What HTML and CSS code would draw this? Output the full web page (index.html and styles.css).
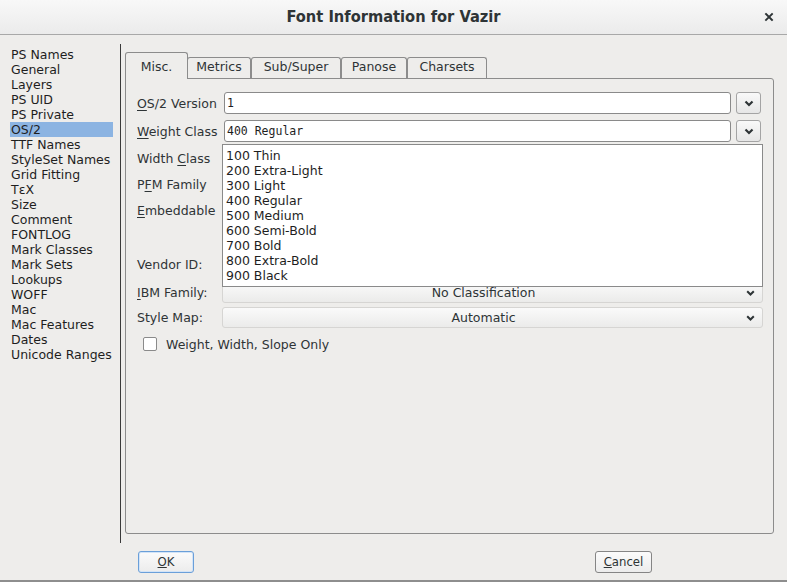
FILE: index.html
```html
<!DOCTYPE html>
<html>
<head>
<meta charset="utf-8">
<link rel="stylesheet" href="styles.css">
</head>
<body>
<div class="window">
  <div class="titlebar">
    <div class="title">Font Information for Vazir</div>
    <button class="close" aria-label="Close">
      <svg width="10" height="10" viewBox="0 0 10 10"><path d="M2 2L8 8M8 2L2 8" stroke="#2e3436" stroke-width="1.9" stroke-linecap="square"/></svg>
    </button>
  </div>
  <div class="main">
    <ul class="sidebar">
      <li>PS Names</li>
      <li>General</li>
      <li>Layers</li>
      <li>PS UID</li>
      <li>PS Private</li>
      <li class="sel">OS/2</li>
      <li>TTF Names</li>
      <li>StyleSet Names</li>
      <li>Grid Fitting</li>
      <li>TεX</li>
      <li>Size</li>
      <li>Comment</li>
      <li>FONTLOG</li>
      <li>Mark Classes</li>
      <li>Mark Sets</li>
      <li>Lookups</li>
      <li>WOFF</li>
      <li>Mac</li>
      <li>Mac Features</li>
      <li>Dates</li>
      <li>Unicode Ranges</li>
    </ul>
    <div class="sep"></div>
    <div class="tabwidget">
      <div class="tabbar">
        <div class="tab active">Misc.</div>
        <div class="tab tab-metrics">Metrics</div>
        <div class="tab tab-subsuper">Sub/Super</div>
        <div class="tab tab-panose">Panose</div>
        <div class="tab tab-charsets">Charsets</div>
      </div>
      <div class="panel">
        <div class="row r1">
          <div class="label"><u>O</u>S/2 Version</div>
          <div class="input">1</div>
          <button class="dropbtn"><svg width="10" height="7" viewBox="0 0 10 7"><path d="M1.5 1.5L5 5L8.5 1.5" fill="none" stroke="#2e3436" stroke-width="2.2"/></svg></button>
        </div>
        <div class="row r2">
          <div class="label"><u>W</u>eight Class</div>
          <div class="input">400 Regular</div>
          <button class="dropbtn"><svg width="10" height="7" viewBox="0 0 10 7"><path d="M1.5 1.5L5 5L8.5 1.5" fill="none" stroke="#2e3436" stroke-width="2.2"/></svg></button>
        </div>
        <div class="row r3"><div class="label">Width <u>C</u>lass</div></div>
        <div class="row r4"><div class="label">P<u>F</u>M Family</div></div>
        <div class="row r5"><div class="label"><u>E</u>mbeddable</div></div>
        <div class="row r6"><div class="label">Vendor ID:</div></div>
        <div class="row r7">
          <div class="label"><u>I</u>BM Family:</div>
          <div class="select"><span class="seltext">No Classification</span><svg class="selarrow" width="9" height="6" viewBox="0 0 9 6"><path d="M1.2 1.2L4.5 4.5L7.8 1.2" fill="none" stroke="#2e3436" stroke-width="2"/></svg></div>
        </div>
        <div class="row r8">
          <div class="label">Style Map:</div>
          <div class="select"><span class="seltext">Automatic</span><svg class="selarrow" width="9" height="6" viewBox="0 0 9 6"><path d="M1.2 1.2L4.5 4.5L7.8 1.2" fill="none" stroke="#2e3436" stroke-width="2"/></svg></div>
        </div>
        <div class="row r9">
          <span class="checkbox"></span>
          <span class="checklabel">Weight, Width, Slope Only</span>
        </div>
        <ul class="popup">
          <li>100 Thin</li>
          <li>200 Extra-Light</li>
          <li>300 Light</li>
          <li>400 Regular</li>
          <li>500 Medium</li>
          <li>600 Semi-Bold</li>
          <li>700 Bold</li>
          <li>800 Extra-Bold</li>
          <li>900 Black</li>
        </ul>
      </div>
    </div>
  </div>
  <div class="footer">
    <button class="btn ok"><u>O</u>K</button>
    <button class="btn cancel"><u>C</u>ancel</button>
  </div>
</div>
</body>
</html>
```
FILE: styles.css
```css
html, body {
  margin: 0;
  padding: 0;
}
body {
  font-family: "DejaVu Sans", sans-serif;
  font-size: 12.5px;
  color: #2e3436;
}
.window {
  width: 787px;
  height: 582px;
  display: flex;
  flex-direction: column;
  background: #eeedeb;
  box-sizing: border-box;
  border-bottom: 2px solid #8e8e8e;
  overflow: hidden;
}
.titlebar {
  flex: none;
  height: 35px;
  box-sizing: border-box;
  border-bottom: 1px solid #a8a8a8;
  background: linear-gradient(#f8f8f8, #ebebeb);
  display: grid;
  grid-template-columns: 1fr auto 1fr;
  align-items: center;
}
.title {
  grid-column: 2;
  font-family: "DejaVu Sans Condensed", "DejaVu Sans", sans-serif;
  font-weight: bold;
  font-size: 16.3px;
  color: #2e3436;
  padding-bottom: 2px;
}
.close {
  grid-column: 3;
  justify-self: end;
  margin-right: 13px;
  width: 10px;
  height: 10px;
  padding: 0;
  border: 0;
  background: none;
  display: flex;
}
.main {
  flex: 1;
  display: flex;
  min-height: 0;
}
.sidebar {
  flex: none;
  width: 120px;
  margin: 0;
  padding: 12px 0 0 0;
  list-style: none;
  box-sizing: border-box;
}
.sidebar li {
  height: 15px;
  line-height: 15px;
  margin-left: 10px;
  width: 103px;
  padding-left: 1px;
  box-sizing: border-box;
  white-space: nowrap;
  color: #1e1e1e;
}
.sidebar li.sel {
  background: #8cb4e2;
}
.sep {
  flex: none;
  width: 0;
  border-left: 1px solid #3a3a3a;
  margin-top: 9px;
  height: 499px;
}
.tabwidget {
  flex: none;
  margin: 17px 0 0 4px;
  width: 649px;
  height: 482px;
  display: flex;
  flex-direction: column;
}
.tabbar {
  flex: none;
  height: 26px;
  display: flex;
  align-items: flex-end;
}
.tab {
  height: 21px;
  box-sizing: border-box;
  border: 1px solid #8c8c8c;
  border-bottom: 0;
  border-radius: 3px 3px 0 0;
  padding: 0;
  line-height: 17px;
  text-align: center;
  background: #eeedeb;
  color: #2e3436;
  white-space: nowrap;
}
.tab-metrics { width: 64px; }
.tab-subsuper { width: 90px; }
.tab-panose { width: 66px; }
.tab-charsets { width: 80px; }
.tab.active {
  width: 63px;
  height: 27px;
  margin-bottom: -1px;
  margin-right: -1px;
  position: relative;
  z-index: 1;
  padding-top: 4px;
  line-height: 20px;
}
.panel {
  flex: 1;
  position: relative;
  border: 1px solid #8c8c8c;
  border-radius: 0 3px 3px 3px;
  padding: 13px 11px 0 11px;
  box-sizing: border-box;
}
.row {
  display: flex;
  align-items: center;
  height: 22px;
}
.r2 { margin-top: 6px; }
.r3 { margin-top: 5px; }
.r4 { margin-top: 4px; }
.r5 { margin-top: 4px; }
.r6 { margin-top: 32px; }
.r7 { margin-top: 7px; height: 21px; }
.r8 { margin-top: 4px; height: 21px; }
.r9 { margin-top: 5px; }
.label {
  flex: none;
  width: 85px;
  white-space: nowrap;
  color: #2e3436;
}
.label u {
  text-underline-offset: 2px;
}
.input {
  flex: none;
  margin-left: 2px;
  width: 507px;
  height: 22px;
  box-sizing: border-box;
  border: 1px solid #8a8a8a;
  border-radius: 3px;
  background: #ffffff;
  font-family: "DejaVu Sans Mono", monospace;
  font-size: 11.5px;
  line-height: 20px;
  padding-left: 2px;
  color: #1e1e1e;
}
.dropbtn {
  flex: none;
  margin-left: 5px;
  width: 25px;
  height: 22px;
  box-sizing: border-box;
  border: 1px solid #a4a4a4;
  border-radius: 3px;
  background: linear-gradient(#f9f9f9, #e6e6e6);
  padding: 0;
  display: flex;
  align-items: center;
  justify-content: center;
}
.select {
  flex: none;
  width: 541px;
  height: 21px;
  box-sizing: border-box;
  border: 1px solid #d6d5d3;
  border-radius: 3px;
  background: linear-gradient(#fafafa, #ebebea);
  display: flex;
  align-items: center;
  padding-right: 7px;
}
.seltext {
  flex: 1;
  text-align: center;
  padding-left: 4px;
  color: #2e3436;
}
.selarrow {
  flex: none;
  margin-left: 6px;
}
.checkbox {
  flex: none;
  width: 14px;
  height: 14px;
  box-sizing: border-box;
  border: 1px solid #8a8a8a;
  border-radius: 2px;
  background: #ffffff;
  margin-left: 6px;
}
.checklabel {
  margin-left: 9px;
  color: #2e3436;
}
.popup {
  position: absolute;
  top: 65px;
  left: 96px;
  width: 541px;
  height: 143px;
  box-sizing: border-box;
  margin: 0;
  padding: 3px 0 0 3px;
  list-style: none;
  background: #ffffff;
  border: 1px solid #8a8a8a;
  z-index: 2;
}
.popup li {
  height: 15px;
  line-height: 15px;
  color: #1e1e1e;
}
.footer {
  flex: none;
  height: 37px;
  display: flex;
  align-items: flex-start;
  padding: 8px 0 0 138px;
  box-sizing: border-box;
}
.btn {
  height: 22px;
  box-sizing: border-box;
  border-radius: 3px;
  background: linear-gradient(#fbfbfb, #ececec);
  font-family: "DejaVu Sans Condensed", "DejaVu Sans", sans-serif;
  font-size: 13px;
  color: #2e3436;
  padding: 0;
  line-height: 18px;
}
.btn.ok {
  width: 56px;
  border: 1px solid #6a9fd9;
  box-shadow: inset 0 0 0 1px #d3e4f7;
}
.btn.cancel {
  width: 57px;
  margin-left: 401px;
  border: 1px solid #858585;
}
```
